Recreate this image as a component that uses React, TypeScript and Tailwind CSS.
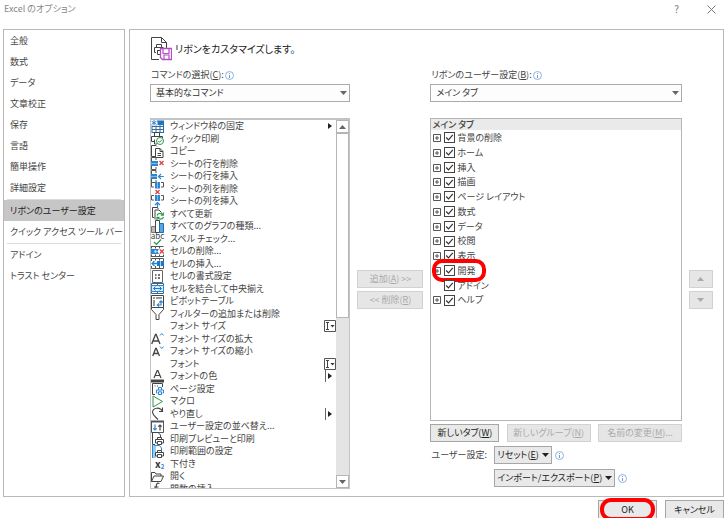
import React, { useState } from "react";

interface IconProps {
  name: string;
}

const icons: Record<string, React.ReactNode> = {
  freeze: (
    <>
      <rect x="1" y="1" width="11.5" height="11.5" fill="#fff" stroke="#1f6fb5" />
      <path d="M6.5 1h6v4h-6z" fill="#1e78c8" />
      <path d="M1 6.500h11.500M1 9.500h11.500M5 4v8.500M9 1v11.500" stroke="#3a6d9a" />
      <path d="M0 0h6v5.500H0z" fill="#fff" />
      <path d="M3 0v5.500M.5 1.200l5 3.200M5.500 1.200l-5 3.200" stroke="#2b86d1" />
    </>
  ),
  quickprint: (
    <>
      <path d="M3.500 4V.5h5V4M3 9.500H.5v-5h11V6M3.500 7.500V12H6" stroke="#444" />
      <circle cx="9" cy="9" r="3.500" fill="#fff" stroke="#2c9a4b" />
      <path d="M7.300 9l1.200 1.300L10.800 7.800" stroke="#2c9a4b" />
    </>
  ),
  copy: (
    <>
      <path d="M4 11.500H.5V.5H5l1 1" stroke="#444" />
      <path d="M4.500 3.500H9l3 3v6H4.500z" fill="#fff" stroke="#444" />
      <path d="M9 3.500v3h3M6.500 8.500h3.500M6.500 10.500h3.500" stroke="#444" />
    </>
  ),
  rowdelete: (
    <>
      <path d="M.5 4V.5H5V3M.5 9v3.500H5V10" stroke="#555" />
      <path d="M0 4h7v5H0z" fill="#2b86d1" />
      <path d="M0 6.500h7" stroke="#7fbbe8" />
      <path d="M8.500 4l4 4M12.500 4l-4 4" stroke="#e0403a" strokeWidth="1.300" />
    </>
  ),
  rowinsert: (
    <>
      <path d="M.5 4V.5H5V3M.5 9v3.500H5V10" stroke="#555" />
      <path d="M0 4h6v5H0z" fill="#2b86d1" />
      <path d="M0 6.500h6" stroke="#7fbbe8" />
      <path d="M12.800 6.500H7.500M10 4L7.500 6.500 10 9" stroke="#2b86d1" strokeWidth="1.200" />
    </>
  ),
  coldelete: (
    <>
      <path d="M3 .5H.5V5H3M10 .5h2.500V5H10" stroke="#555" />
      <path d="M4 0h5v6.500H4z" fill="#2b86d1" />
      <path d="M6.500 0v6.500" stroke="#7fbbe8" />
      <path d="M4.500 8l4 4M8.500 8l-4 4" stroke="#e0403a" strokeWidth="1.300" />
    </>
  ),
  colinsert: (
    <>
      <path d="M3 .5H.5V5H3M10 .5h2.500V5H10" stroke="#555" />
      <path d="M4 0h5v6H4z" fill="#2b86d1" />
      <path d="M6.500 0v6" stroke="#7fbbe8" />
      <path d="M6.500 13V7.500M4 10l2.500-2.500L9 10" stroke="#2b86d1" strokeWidth="1.200" />
    </>
  ),
  refresh: (
    <>
      <path d="M3 10.500H1.500V.5H6l1.500 1.500M4 12.500V3h4l2.500 2.500" stroke="#444" />
      <path
        d="M6 8.500c.8-2.500 4.500-2.800 6-.5M12.300 5.500V8.200H9.800M12.500 10c-.8 2.500-4.500 2.800-6 .5M6 13v-2.700h2.500"
        stroke="#2c9a4b"
        strokeWidth="1.200"
      />
    </>
  ),
  chart: (
    <>
      <path d="M.5 6.500h4v6h-4z" fill="#bbb" stroke="#777" />
      <path d="M4.500.5h4v12h-4z" fill="#fff" stroke="#444" />
      <path d="M8.500 3.500h4v9h-4z" fill="#5aa5df" stroke="#1f6fb5" />
    </>
  ),
  celldelete: (
    <>
      <path d="M.5 1.500h12M.5 11.500h12M.5 1v2.500M4.500 1v2.500M8.500 1v2.500M.5 9.500V12M4.500 9.500V12M8.500 9.500V12M12.500 9.500V12" stroke="#555" />
      <path d="M0 4h3v5H0zM3 4h5l-1.500 2.500L8 9H3z" fill="#2b86d1" />
      <circle cx="4.500" cy="6.500" r="1.200" fill="#cfe6f8" />
      <path d="M8.800 4.500l4 4M12.800 4.500l-4 4" stroke="#e0403a" strokeWidth="1.300" />
    </>
  ),
  cellinsert: (
    <>
      <path d="M.5 1.500h12v10H.5zM4.500 1v2.500M8.500 1v2.500M4.500 9v3M8.500 9v3" stroke="#555" />
      <path d="M6 4h7v5H6z" fill="#1e78c8" />
      <path d="M9.500 4v5" stroke="#9ccdf0" />
      <path d="M0 4h6v5H0z" fill="#fff" />
      <path d="M7 6.500H1M3.500 4L1 6.500 3.500 9" stroke="#2b86d1" strokeWidth="1.300" />
    </>
  ),
  cellformat: (
    <>
      <path d="M1.500.5h10v12h-10z" fill="#fff" stroke="#666" />
      <path d="M4 5h1.500M4 8h1.500M7 5h2M7 8h2" stroke="#444" strokeWidth="1.300" />
    </>
  ),
  merge: (
    <>
      <path d="M.5 1.500h12v10H.5zM6.500 1v2.500M6.500 9.500V12" stroke="#39678f" />
      <path d="M.5 3.500h12v6H.5z" fill="#dceefb" stroke="#2b86d1" />
      <path d="M2.500 6.500h8M4.500 4.500l-2 2 2 2M8.500 4.500l2 2-2 2" stroke="#1e78c8" />
    </>
  ),
  pivot: (
    <>
      <path d="M.5.5h12v12H.5z" fill="#fff" stroke="#444" />
      <path d="M2 2h2v2H2zM5 2h6v2H5zM2 5h2v6H2z" fill="#999" />
      <path d="M6.500 10h3.500V5.800M8.300 7.500L10 5.800l1.700 1.700M8 8.300L6.300 10 8 11.700" stroke="#2b86d1" strokeWidth="1.200" />
    </>
  ),
  filter: <path d="M.5.500h12v2L8 7.500v5H5v-5L.5 2.500z" fill="#fff" stroke="#444" />,
  undo: <path d="M11.500.5v4H8M11.500 4.500C9-.5 2 .5 1.500 5c0 2 1 3.500 5.500 7.500" stroke="#444" strokeWidth="1.100" />,
  fontup: (
    <>
      <path d="M.7 12L4.500 2.500h.6L9 12M2 9h5.500" stroke="#444" strokeWidth="1.300" />
      <path d="M9 3.500l1.800-2 1.800 2" stroke="#2b86d1" />
    </>
  ),
  fontdown: (
    <>
      <path d="M1.700 11L4.700 3.500h.6L8.500 11M2.700 8.500h5" stroke="#444" strokeWidth="1.300" />
      <path d="M9 1.500l1.800 2 1.800-2" stroke="#2b86d1" />
    </>
  ),
  fontcolor: (
    <>
      <path d="M3 8L6.200.5h.6L10 8M4.200 5.500h4.600" stroke="#444" strokeWidth="1.200" />
      <path d="M0 9.500h13v3H0z" fill="#444" />
    </>
  ),
  pagesetup: (
    <>
      <path d="M4 12.500H1.500V1.500h10V5" stroke="#444" />
      <path d="M3.500 4h1M6 4h1" stroke="#444" />
      <path d="M7.500 8V5.500h3V8M6.500 11h-1V8h7v3h-1M7.500 9.800h3v2.700h-3z" fill="#fff" stroke="#2b86d1" />
    </>
  ),
  macro: <path d="M2 1v11l9.500-5.500z" fill="#fff" stroke="#2c9a4b" />,
  sort: (
    <>
      <path d="M.5 1.500h12v11H.5z" fill="#fff" stroke="#555" />
      <path d="M0 1.500h13" stroke="#555" strokeWidth="2" />
      <path d="M4 4.500V10M2.300 8.300L4 10l1.700-1.700" stroke="#2b86d1" strokeWidth="1.200" />
      <path d="M9 10.500V5M7.300 6.700L9 5l1.700 1.700" stroke="#444" strokeWidth="1.200" />
    </>
  ),
  preview: (
    <>
      <path d="M4 12.500H1.500V.5H7L9.500 3v2" stroke="#444" />
      <path d="M6.500 7.500v-2h4v2M6 11H4.500V7.500h8V11H11M6.500 9.500h4v3h-4z" fill="#fff" stroke="#444" />
    </>
  ),
  printarea: (
    <>
      <path d="M1 0h4v13H1z" fill="#9ccdf0" />
      <path d="M3.500.5h5L10.500 3v2M1.500 0v13" stroke="#2b86d1" />
      <path d="M6.500 7.500v-2h4v2M6 11H4.500V7.500h8V11H11M6.500 9.500h4v3h-4z" fill="#fff" stroke="#444" />
    </>
  ),
  open: (
    <path d="M.5 11.500V2.500h3.500l1 1.500h5v2M.5 11.500L3 6h9.500l-2.500 5.500z" fill="#fff" stroke="#444" />
  ),
  fx: <path d="M8.500 1.500C6 .5 5.500 2 5.200 4L4 12M3 5h4.500" stroke="#444" strokeWidth="1.200" />,
};

const Icon = ({ name }: IconProps) => {
  if (name === "spell") {
    return (
      <span className="flex w-[13px] shrink-0 flex-col items-center">
        <span className="text-[8px] leading-[6px]">abc</span>
        <svg width="9" height="6" viewBox="0 0 9 6" fill="none">
          <path d="M1 3l2.500 2.500L8 .5" stroke="#2c9a4b" strokeWidth="1.200" />
        </svg>
      </span>
    );
  }
  if (name === "subscript") {
    return (
      <span className="flex w-[13px] shrink-0 items-end pl-1 font-bold text-[#333]">
        <span className="text-[10px]">x</span>
        <span className="text-[6px] leading-[7px] text-[#2b86d1]">2</span>
      </span>
    );
  }
  return (
    <svg className="shrink-0" width="13" height="13" viewBox="0 0 13 13" fill="none">
      {icons[name]}
    </svg>
  );
};

const commands = [
  { icon: "freeze", title: "ウィンドウ枠の固定", extra: "menu" },
  { icon: "quickprint", title: "クイック印刷" },
  { icon: "copy", title: "コピー" },
  { icon: "rowdelete", title: "シートの行を削除" },
  { icon: "rowinsert", title: "シートの行を挿入" },
  { icon: "coldelete", title: "シートの列を削除" },
  { icon: "colinsert", title: "シートの列を挿入" },
  { icon: "refresh", title: "すべて更新" },
  { icon: "chart", title: "すべてのグラフの種類..." },
  { icon: "spell", title: "スペル チェック..." },
  { icon: "celldelete", title: "セルの削除..." },
  { icon: "cellinsert", title: "セルの挿入..." },
  { icon: "cellformat", title: "セルの書式設定" },
  { icon: "merge", title: "セルを結合して中央揃え" },
  { icon: "pivot", title: "ピボットテーブル" },
  { icon: "filter", title: "フィルターの追加または削除" },
  { icon: "none", title: "フォント サイズ", extra: "combo" },
  { icon: "fontup", title: "フォント サイズの拡大" },
  { icon: "fontdown", title: "フォント サイズの縮小" },
  { icon: "none", title: "フォント", extra: "combo" },
  { icon: "fontcolor", title: "フォントの色", extra: "split" },
  { icon: "pagesetup", title: "ページ設定" },
  { icon: "macro", title: "マクロ" },
  { icon: "undo", title: "やり直し", extra: "split" },
  { icon: "sort", title: "ユーザー設定の並べ替え..." },
  { icon: "preview", title: "印刷プレビューと印刷" },
  { icon: "printarea", title: "印刷範囲の設定" },
  { icon: "subscript", title: "下付き" },
  { icon: "open", title: "開く" },
  { icon: "fx", title: "関数の挿入" },
];

const tabs = [
  "背景の削除",
  "ホーム",
  "挿入",
  "描画",
  "ページ レイアウト",
  "数式",
  "データ",
  "校閲",
  "表示",
  "開発",
  "アドイン",
  "ヘルプ",
];

const menuGroups = [
  ["全般", "数式", "データ", "文章校正", "保存", "言語", "簡単操作", "詳細設定"],
  ["リボンのユーザー設定", "クイック アクセス ツール バー"],
  ["アドイン", "トラスト センター"],
];

const Extra = ({ type }: { type?: string }) => {
  if (type === "combo") {
    return (
      <svg className="shrink-0" width="12" height="12" viewBox="0 0 12 12" fill="none">
        <path d="M.5.5h11v11H.5z" stroke="#555" />
        <path d="M2 2.500h3M3.500 2.500v7M2 9.500h3" stroke="#444" />
        <path d="M6.500 5h4l-2 2.500z" fill="#333" />
      </svg>
    );
  }
  if (type === "split" || type === "menu") {
    return (
      <svg className="shrink-0" width="12" height="12" viewBox="0 0 12 12">
        {type === "split" && <path d="M1 0h1v12H1z" fill="#666" />}
        <path d="M4 3l4 3-4 3z" fill="#222" />
      </svg>
    );
  }
  return null;
};

const Triangle = ({ up = false }: { up?: boolean }) => (
  <svg className="shrink-0" width="7" height="4" viewBox="0 0 7 4" fill="currentColor">
    <path d={up ? "M0 4h7L3.500 0z" : "M0 0h7L3.500 4z"} />
  </svg>
);

const Info = () => (
  <svg className="shrink-0" width="9" height="9" viewBox="0 0 9 9" fill="none">
    <circle cx="4.500" cy="4.500" r="4" stroke="#8fb2e0" />
    <path d="M4.500 2v1M4.500 4v3" stroke="#6f9ad6" />
  </svg>
);

interface ButtonProps {
  children: React.ReactNode;
  isDisabled?: boolean;
  className?: string;
  label?: string;
}

const DialogButton = ({ children, isDisabled, className = "", label }: ButtonProps) => (
  <button
    type="button"
    disabled={isDisabled}
    aria-label={label}
    className={`flex h-[18px] items-center justify-center gap-[3px] border border-[#a6a6a6] bg-[#e9e9e9] whitespace-nowrap text-[#222] disabled:border-[#d2d2d2] disabled:bg-[#e6e6e6] disabled:text-[#aaa] ${className}`}
  >
    {children}
  </button>
);

interface SelectProps {
  id: string;
  title: string;
  accessKey: string;
  option: string;
}

const SelectField = ({ id, title, accessKey, option }: SelectProps) => (
  <div>
    <div className="flex h-4 items-center gap-px pl-px">
      <label htmlFor={id}>
        {title}(<u>{accessKey}</u>):
      </label>
      <Info />
    </div>
    <div className="relative mt-px">
      <select
        id={id}
        className="block h-[18px] w-full appearance-none border border-[#ababab] bg-[#fdfdfd] pl-[5px] text-[#333]"
      >
        <option>{option}</option>
      </select>
      <span className="pointer-events-none absolute top-[7px] right-[3px] text-[#666]">
        <Triangle />
      </span>
    </div>
  </div>
);

const Sidebar = () => (
  <nav className="w-[122px] shrink-0 border border-[#b9b9b9]">
    {menuGroups.map((group, index) => (
      <div key={index}>
        {index > 0 && <div className="mx-[3px] mt-px h-px bg-[#dcdcdc]" />}
        {group.map((item) => (
          <a
            key={item}
            href="#"
            className={`flex h-[21px] items-center pl-[6px] whitespace-nowrap ${
              item === "リボンのユーザー設定" ? "bg-[#c6c6c6] text-[#222]" : ""
            }`}
          >
            {item}
          </a>
        ))}
      </div>
    ))}
  </nav>
);

const CommandList = () => (
  <div className="mt-4 flex h-[371px] border border-t-2 border-[#c4c4c4]">
    <ul className="min-w-0 flex-1 overflow-hidden">
      {commands.map((command) => (
        <li key={command.title} className="flex items-center odd:h-[12px] even:h-[13px]">
          <Icon name={command.icon} />
          <span className="flex-1 pl-[6px] whitespace-nowrap">{command.title}</span>
          <Extra type={command.extra} />
        </li>
      ))}
    </ul>
    <div className="flex w-[13px] flex-col bg-[#e4e4e4] text-[#666]">
      <div className="flex h-[13px] items-center justify-center border border-[#b5b5b5] bg-white">
        <Triangle up />
      </div>
      <div className="h-[185px] border border-[#b5b5b5] bg-white" />
      <div className="mt-auto flex h-[13px] items-center justify-center border border-[#b5b5b5] bg-white">
        <Triangle />
      </div>
    </div>
  </div>
);

const TabTree = () => {
  const [checked, setChecked] = useState<string[]>(tabs);

  const handleToggle = (tab: string) => {
    setChecked(
      checked.includes(tab) ? checked.filter((t) => t !== tab) : [...checked, tab]
    );
  };

  return (
    <div className="mt-4 h-[303px] border border-[#b5b5b5]">
      <p className="h-[11px] bg-[#eaeaea] pl-px leading-3 font-medium text-[#444]">メイン タブ</p>
      <ul>
        {tabs.map((tab) => (
          <li
            key={tab}
            className="relative flex h-[15px] items-center pl-[2px] nth-[4n]:h-[14px]"
          >
            {tab === "アドイン" ? (
              <span className="w-2" />
            ) : (
              <button type="button" aria-label="展開">
                <svg width="8" height="8" viewBox="0 0 8 8" fill="none">
                  <path d="M.5.5h7v7h-7zM2 4h4M4 2v4" stroke="#555" />
                </svg>
              </button>
            )}
            <label className="flex items-center gap-[2px] pl-[3px]">
              <span className="grid">
                <input
                  type="checkbox"
                  checked={checked.includes(tab)}
                  onChange={() => handleToggle(tab)}
                  className="peer col-start-1 row-start-1 size-[11px] appearance-none border border-[#444] bg-white"
                />
                <svg
                  className="pointer-events-none invisible col-start-1 row-start-1 peer-checked:visible"
                  width="11"
                  height="11"
                  viewBox="0 0 11 11"
                  fill="none"
                >
                  <path d="M2.200 5.500l2.300 2.300 4.300-5" stroke="#333" strokeWidth="1.200" />
                </svg>
              </span>
              {tab}
            </label>
            {tab === "開発" && (
              <span className="pointer-events-none absolute -top-1 left-px h-[23px] w-[54px] rounded-[10px] border-4 border-[#ff0000]" />
            )}
          </li>
        ))}
      </ul>
    </div>
  );
};

const RibbonPanel = () => (
  <main className="min-w-0 flex-1 border border-[#b9b9b9] pt-[5px] pr-[10px] pb-[7px] pl-5">
    <div className="flex h-[27px] items-center gap-[3px]">
      <svg width="22" height="25" viewBox="0 0 22 25" fill="none">
        <path d="M9 23.500H1.500V1.500h10l5 5V13M11.500 1.500v5h5" stroke="#444" />
        <path d="M6.500 11V8.500h5V11M6 16.500H4.500V11.500h9M7 14.500h3M7.500 14.500v4h3" stroke="#444" />
        <path d="M10.500 12.500h11v11h-9l-2-2z" fill="#fff" stroke="#b24fc4" strokeWidth="1.300" />
        <path d="M13 13v4.500h6V13M14 23v-4h5v4" stroke="#b24fc4" strokeWidth="1.200" />
      </svg>
      <h1 className="text-[10px] text-[#222]">リボンをカスタマイズします。</h1>
    </div>
    <div className="mt-[5px] grid grid-cols-[minmax(0,200fr)_66px_minmax(0,251fr)_24px] gap-x-[7px]">
      <div>
        <SelectField id="commands" title="コマンドの選択" accessKey="C" option="基本的なコマンド" />
        <CommandList />
      </div>
      <div className="flex flex-col gap-[3px] pt-[203px]">
        <DialogButton isDisabled>
          <span>
            追加(<u>A</u>) &gt;&gt;
          </span>
        </DialogButton>
        <DialogButton isDisabled>
          <span>
            &lt;&lt; 削除(<u>R</u>)
          </span>
        </DialogButton>
      </div>
      <div>
        <SelectField id="ribbon" title="リボンのユーザー設定" accessKey="B" option="メイン タブ" />
        <TabTree />
        <div className="mt-[3px] flex justify-between">
          <DialogButton className="w-[69px]">
            <span>
              新しいタブ(<u>W</u>)
            </span>
          </DialogButton>
          <DialogButton isDisabled className="w-[84px]">
            <span>
              新しいグループ(<u>N</u>)
            </span>
          </DialogButton>
          <DialogButton isDisabled className="w-[84px]">
            <span>
              名前の変更(<u>M</u>)...
            </span>
          </DialogButton>
        </div>
        <div className="mt-1 grid grid-cols-[64px_1fr] items-center gap-y-[5px]">
          <span className="pl-px">ユーザー設定:</span>
          <div className="flex items-center gap-[3px]">
            <DialogButton className="px-[2px]">
              <span>
                リセット(<u>E</u>)
              </span>
              <Triangle />
            </DialogButton>
            <Info />
          </div>
          <div className="col-start-2 flex items-center gap-[3px]">
            <DialogButton className="px-[2px]">
              <span>
                インポート/エクスポート(<u>P</u>)
              </span>
              <Triangle />
            </DialogButton>
            <Info />
          </div>
        </div>
      </div>
      <div className="flex flex-col gap-[3px] pt-[203px]">
        <DialogButton isDisabled label="上へ">
          <Triangle up />
        </DialogButton>
        <DialogButton isDisabled label="下へ">
          <Triangle />
        </DialogButton>
      </div>
    </div>
  </main>
);

const App = () => {
  return (
    <div className="bg-white pr-[2px] pl-[3px] font-['Noto_Sans_CJK_JP',sans-serif] text-[9px] leading-3 text-[#444] [font-feature-settings:'palt']">
      <header className="flex h-[29px] items-start justify-between pt-[3px] pr-2 pl-px text-[#888]">
        <span>Excel のオプション</span>
        <div className="flex items-center gap-[28px] text-[#777]">
          <button type="button" aria-label="ヘルプ" className="text-[10px]">
            ?
          </button>
          <button type="button" aria-label="閉じる">
            <svg width="9" height="9" viewBox="0 0 9 9" fill="none">
              <path d="M.5.500l8 8M8.500.500l-8 8" stroke="#777" />
            </svg>
          </button>
        </div>
      </header>
      <div className="flex gap-1">
        <Sidebar />
        <RibbonPanel />
      </div>
      <footer className="mt-[3px] flex justify-end gap-2">
        <div className="relative">
          <DialogButton className="w-[59px] border-b-0">OK</DialogButton>
          <span className="pointer-events-none absolute -top-[2px] left-[2px] h-[23px] w-[55px] rounded-[11px] border-4 border-[#ff0000]" />
        </div>
        <DialogButton className="w-[59px] border-b-0">キャンセル</DialogButton>
      </footer>
    </div>
  );
};

export default App;
